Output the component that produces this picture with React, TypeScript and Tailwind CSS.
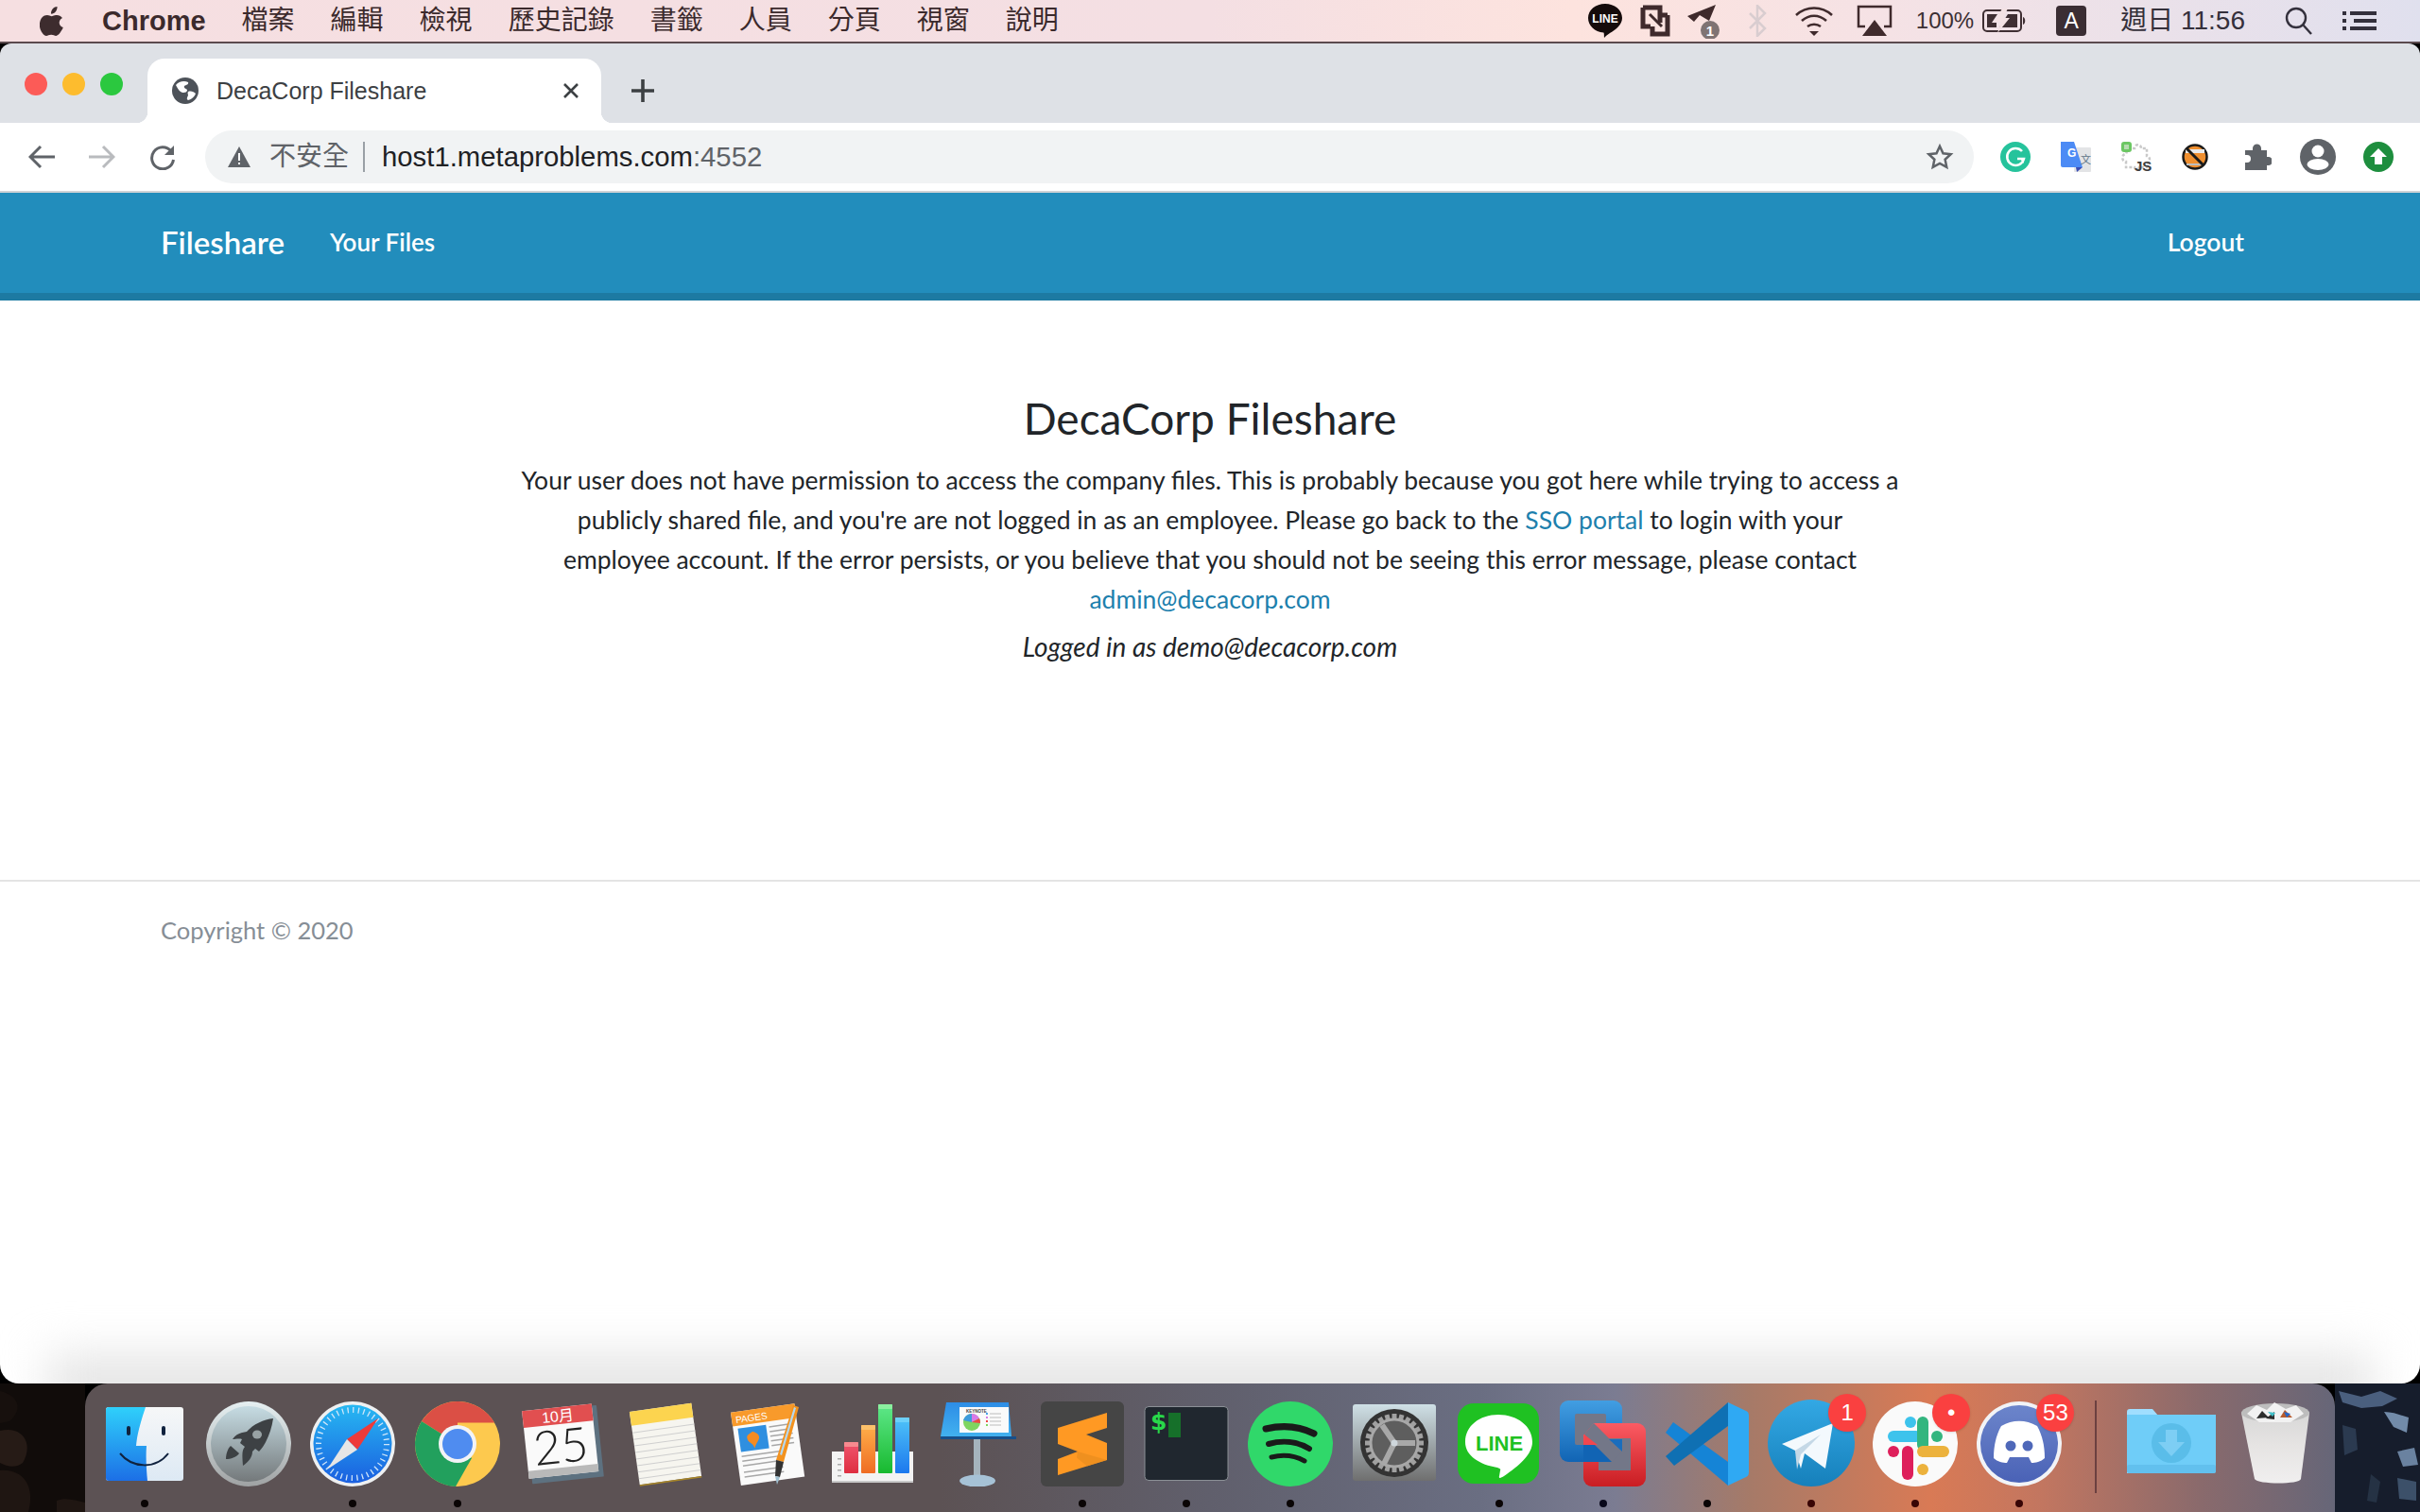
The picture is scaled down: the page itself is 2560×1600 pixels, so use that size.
import React from "react";

const sans = "font-['Liberation_Sans',sans-serif]";

function Apple() {
  return (
    <svg width="26" height="32" viewBox="0 0 26 32" fill="#3d2c2e">
      <path d="M18.5 1c.2 2.200-.6 4-1.800 5.400-1.300 1.500-3 2.400-4.700 2.200-.2-2 .7-4 1.800-5.300C15.100 1.900 17 1 18.500 1zM24.800 23c-.8 1.800-1.200 2.600-2.200 4.100-1.400 2.200-3.100 4.800-5.300 4.800-1.900 0-2.500-1.200-5.200-1.200-2.600 0-3.300 1.200-5.200 1.300-2.200 0-3.800-2.400-5.100-4.500C-1.800 21.700-.3 13.200 5 10.600c1.900-1 4-.8 5.400-.2 1.100.4 1.900.8 2.500.8.600 0 1.600-.5 3-.9 2.900-.9 6-.1 8.100 2.600-4.900 2.800-4.100 8.900.8 10.100z" />
    </svg>
  );
}

function MenuRight() {
  return (
    <div className="ml-auto flex items-center h-full">
      <svg width="44" height="42" viewBox="0 0 44 42">
        <path d="M22 3c10 0 18 6.600 18 15 0 6.800-6 12-13 16-3 1.900-5 3.800-6 5-.3-1.600.2-4.600-.6-5.400C11 32.500 4 26.400 4 18 4 9.600 12 3 22 3z" fill="#150b0b" />
        <text x="22" y="22.500" textAnchor="middle" fontSize="12" fontWeight="700" fill="#fff" fontFamily="Liberation Sans">LINE</text>
      </svg>
      <svg width="36" height="36" viewBox="0 0 36 36" className="ml-[14px]" fill="none">
        <path d="M4 4h18v16M4 4v20h8" stroke="#3f2a2c" strokeWidth="5" />
        <path d="M30 12v20H14v-8M30 12h-8" stroke="#3f2a2c" strokeWidth="5" />
        <path d="M11 11l13 13" stroke="#3f2a2c" strokeWidth="3" />
      </svg>
      <svg width="38" height="38" viewBox="0 0 38 38" className="ml-[14px]">
        <path d="M1 14L31 2 24 19 14 13 8 20z" fill="#3f2a2c" />
        <circle cx="25" cy="29" r="10" fill="#7f7373" />
        <text x="25" y="35" textAnchor="middle" fontSize="15" fontWeight="700" fill="#fff" fontFamily="Liberation Sans">1</text>
      </svg>
      <svg width="22" height="34" viewBox="0 0 22 34" className="ml-[26px]" fill="none" stroke="#d9cdd0" strokeWidth="2.500">
        <path d="M3 9l16 16-8 8V1l8 8L3 25" />
      </svg>
      <svg width="42" height="34" viewBox="0 0 42 34" className="ml-[28px]" fill="none" stroke="#3f2a2c" strokeWidth="2.600">
        <path d="M2 11c11-10 27-10 38 0M8 17c8-7 18-7 26 0M14 23c4-3 10-3 14 0" />
        <path d="M16 28h10l-5 5z" fill="#3f2a2c" stroke="none" />
      </svg>
      <svg width="38" height="36" viewBox="0 0 38 36" className="ml-[24px]" fill="none">
        <path d="M9 24H2V3h34v21h-7" stroke="#3f2a2c" strokeWidth="2.500" />
        <path d="M19 17l13 17H6z" fill="#3f2a2c" />
      </svg>
      <span className="ml-[25px] text-[24px] text-[#3b2f33] leading-none">100%</span>
      <svg width="48" height="28" viewBox="0 0 48 28" className="ml-[9px]" fill="none">
        <rect x="1" y="3" width="40" height="22" rx="4" stroke="#3f2f33" strokeWidth="2" />
        <path d="M5 7h11L10 16h5v5H5zM37 7h-10l-9 14h19z" fill="#3f2f33" />
        <path d="M21 1l-8 14h7l-4 12 13-16h-7l5-10z" fill="#f4e2e4" />
        <path d="M43 10c3 1 3 7 0 8z" fill="#3f2f33" />
      </svg>
      <div className="ml-[30px] flex h-[32px] w-[32px] items-center justify-center rounded-[4px] bg-[#3a2d33] text-[23px] text-white">A</div>
      <span className="ml-[36px] whitespace-nowrap text-[28px] leading-none text-[#35303b] font-['Liberation_Sans','Noto_Sans_CJK_TC',sans-serif]">週日 11:56</span>
      <svg width="30" height="30" viewBox="0 0 30 30" className="ml-[42px]" fill="none" stroke="#33303c" strokeWidth="2.400">
        <circle cx="12" cy="12" r="10" />
        <path d="M19 19l9 10" />
      </svg>
      <svg width="36" height="22" viewBox="0 0 36 22" className="ml-[31px] mr-[46px]" fill="#33303c">
        <rect x="0" y="1" width="4" height="4" />
        <rect x="8" y="1" width="28" height="4" />
        <rect x="0" y="9" width="4" height="4" />
        <rect x="12" y="9" width="24" height="4" />
        <rect x="0" y="17" width="4" height="4" />
        <rect x="8" y="17" width="28" height="4" />
      </svg>
    </div>
  );
}

function MenuBar() {
  const items = ["檔案", "編輯", "檢視", "歷史記錄", "書籤", "人員", "分頁", "視窗", "說明"];
  return (
    <div className="flex h-[46px] shrink-0 items-center border-b-2 border-[#5b4a4e] bg-[linear-gradient(90deg,#f6dfe1_0%,#f4dfe3_50%,#fde3de_65%,#f5e2e5_78%,#e0e0ee_100%)] pl-[42px] text-[#3b2a2c] font-['Liberation_Sans','Noto_Sans_CJK_TC',sans-serif]">
      <Apple />
      <span className="ml-[40px] text-[29px] font-bold leading-none">Chrome</span>
      <div className="ml-[38px] flex gap-[38px] text-[28px] leading-none">
        {items.map((t) => (
          <span key={t}>{t}</span>
        ))}
      </div>
      <MenuRight />
    </div>
  );
}

function Globe() {
  return (
    <svg width="28" height="28" viewBox="0 0 28 28">
      <circle cx="14" cy="14" r="14" fill="#4d5259" />
      <path d="M4 8c3-4 9-5 13-3 1 2-2 3-4 4-1 2 2 3 3 4 0 3-3 3-5 3-3-1-5-4-7-8zM17 15c3-1 6 0 8 2-1 3-4 6-8 7-2-1-1-3 0-5 0-1-1-3 0-4z" fill="#fff" />
    </svg>
  );
}

function TabStrip() {
  return (
    <div className="flex h-[84px] shrink-0 items-start rounded-t-[12px] bg-[#dee1e6]">
      <div className="mt-[31px] ml-[26px] flex gap-[16px]">
        <div className="h-[24px] w-[24px] rounded-full bg-[#fc5b57]" />
        <div className="h-[24px] w-[24px] rounded-full bg-[#fdbc2e]" />
        <div className="h-[24px] w-[24px] rounded-full bg-[#2bc83f]" />
      </div>
      <div className="relative mt-[16px] ml-[26px] flex h-[68px] w-[480px] items-center rounded-t-[18px] bg-white pl-[26px] pr-[23px]">
        <div className="absolute bottom-0 -left-[12px] h-[12px] w-[12px] bg-[radial-gradient(circle_at_0_0,#dee1e6_12px,#ffffff_12.500px)]" />
        <div className="absolute bottom-0 -right-[12px] h-[12px] w-[12px] bg-[radial-gradient(circle_at_100%_0,#dee1e6_12px,#ffffff_12.500px)]" />
        <Globe />
        <span className="ml-[19px] text-[25px] leading-none text-[#3c4043]">DecaCorp Fileshare</span>
        <svg width="18" height="18" viewBox="0 0 18 18" className="ml-auto" stroke="#3c4043" strokeWidth="2.600">
          <path d="M2 2l14 14M16 2L2 16" />
        </svg>
      </div>
      <svg width="24" height="24" viewBox="0 0 24 24" className="mt-[38px] ml-[32px]" stroke="#3c4043" strokeWidth="3.600">
        <path d="M12 0v24M0 12h24" />
      </svg>
    </div>
  );
}

function ToolCell({ children }: { children: React.ReactNode }) {
  return <div className="flex h-[64px] w-[64px] shrink-0 items-center justify-center">{children}</div>;
}

function Toolbar() {
  return (
    <div className="flex h-[74px] shrink-0 items-center border-b-2 border-[#d0d3d6] bg-white pl-[12px] pr-[12px]">
      <ToolCell>
        <svg width="28" height="26" viewBox="0 0 28 26" fill="none" stroke="#5f6368" strokeWidth="3">
          <path d="M13 2L2 13l11 11M2 13h26" />
        </svg>
      </ToolCell>
      <ToolCell>
        <svg width="28" height="26" viewBox="0 0 28 26" fill="none" stroke="#b9bbbe" strokeWidth="3">
          <path d="M15 2l11 11-11 11M26 13H0" />
        </svg>
      </ToolCell>
      <ToolCell>
        <svg width="28" height="28" viewBox="0 0 28 28" fill="none">
          <path d="M23 8A11.500 11.500 0 1 0 25.500 17" stroke="#5f6368" strokeWidth="3" />
          <path d="M26 2v10H16z" fill="#5f6368" />
        </svg>
      </ToolCell>
      <div className="ml-[13px] flex h-[56px] flex-1 items-center rounded-full bg-[#f1f3f4] pl-[23px] font-['Liberation_Sans','Noto_Sans_CJK_TC',sans-serif]">
        <svg width="26" height="24" viewBox="0 0 26 24">
          <path d="M13 1l12 22H1z" fill="#5f6368" />
          <path d="M12 8h2v8h-2zM12 18h2v2h-2z" fill="#fff" />
        </svg>
        <span className="ml-[19px] text-[28px] leading-none text-[#5f6368]">不安全</span>
        <div className="ml-[15px] h-[32px] w-[2px] bg-[#9aa0a6]" />
        <span className="ml-[18px] text-[29.300px] leading-none text-[#202124]">
          host1.metaproblems.com<span className="text-[#5f6368]">:4552</span>
        </span>
        <svg width="32" height="30" viewBox="0 0 24 24" className="ml-auto mr-[20px]" fill="none" stroke="#5f6368" strokeWidth="2">
          <path d="M12 3l2.800 6 6.500.8-4.800 4.400 1.300 6.500L12 17.500 6.200 20.700l1.300-6.500L2.700 9.800 9.200 9z" />
        </svg>
      </div>
      <div className="ml-[12px] flex">
        <ToolCell>
          <svg width="32" height="32" viewBox="0 0 32 32" fill="none">
            <circle cx="16" cy="16" r="16" fill="#26c39c" />
            <path d="M23 10a9 9 0 1 0 2 8h-7" stroke="#fff" strokeWidth="2.500" />
            <path d="M25 23v-6h-5z" fill="#fff" />
          </svg>
        </ToolCell>
        <ToolCell>
          <svg width="32" height="32" viewBox="0 0 32 32">
            <rect x="14" y="6" width="18" height="26" rx="1" fill="#e3e4e6" />
            <path d="M0 0h14l9 27H2a2 2 0 0 1-2-2z" fill="#4c8bf5" />
            <path d="M16 27h7l-6 5z" fill="#3a4db5" />
            <text x="7" y="16" fontSize="12" fontWeight="700" fill="#fff" fontFamily="Liberation Sans">G</text>
            <text x="21" y="23" fontSize="11" fill="#5d7386" fontFamily="Noto Sans CJK TC">文</text>
          </svg>
        </ToolCell>
        <ToolCell>
          <svg width="34" height="34" viewBox="0 0 34 34">
            <path d="M8 8h7c0-5 7-5 7 0h6v8c4 0 4 8 0 8v4h-8c0 3-5 3-5 0H6v-6c-5 0-5-8 0-8z" fill="#fff" stroke="#c9c9c9" strokeWidth="2.500" strokeDasharray="3 2" />
            <rect x="1" y="1" width="11" height="11" rx="3" fill="#6cc763" />
            <rect x="4" y="4" width="5" height="5" fill="#b7dcb1" />
            <text x="15" y="32" fontSize="15" fontWeight="700" fill="#3c3c3c" fontFamily="Liberation Sans">JS</text>
          </svg>
        </ToolCell>
        <ToolCell>
          <svg width="28" height="28" viewBox="0 0 28 28" fill="none" className="-ml-[4px]">
            <circle cx="14" cy="14" r="12.500" fill="#ef8f2f" stroke="#1a1a1a" strokeWidth="2.500" />
            <path d="M4 6h20v4H4z" fill="#e9e9e9" />
            <path d="M5 23h18v-2H5z" fill="#bdbdbd" />
            <path d="M5 5l18 18" stroke="#1a1a1a" strokeWidth="3" />
          </svg>
        </ToolCell>
        <ToolCell>
          <svg width="30" height="30" viewBox="0 0 30 30" fill="#5f6368">
            <path d="M2 8h8V6a4.500 4.500 0 0 1 9 0v2h6v7h1.500a4.500 4.500 0 0 1 0 9H25v5H2v-8h2a4 4 0 0 0 0-8H2z" />
          </svg>
        </ToolCell>
        <ToolCell>
          <svg width="38" height="38" viewBox="0 0 38 38">
            <circle cx="19" cy="19" r="19" fill="#5f6368" />
            <circle cx="19" cy="13" r="6.500" fill="#fff" />
            <ellipse cx="19" cy="27" rx="11.500" ry="6" fill="#fff" />
          </svg>
        </ToolCell>
        <ToolCell>
          <svg width="32" height="32" viewBox="0 0 32 32">
            <circle cx="16" cy="16" r="16" fill="#1e8e3e" />
            <path d="M16 7l9 9h-5v8h-8v-8H7z" fill="#fff" />
          </svg>
        </ToolCell>
      </div>
    </div>
  );
}

function Navbar() {
  return (
    <div className="flex h-[114px] shrink-0 items-center border-b-[8px] border-[#1d7aa2] bg-[#228dbc] px-[170px] pb-[2px] text-white font-['Lato',sans-serif]">
      <span className="text-[33px] font-semibold leading-none">Fileshare</span>
      <span className="ml-[48px] text-[26px] font-semibold leading-none">Your Files</span>
      <span className="ml-auto mr-[16px] text-[26.500px] font-semibold leading-none">Logout</span>
    </div>
  );
}

function Content() {
  return (
    <div className="relative flex flex-1 flex-col overflow-hidden rounded-b-[20px] bg-white font-['Lato',sans-serif]">
      <div className="flex flex-col items-center text-center pt-[96px]">
        <h1 className="text-[46px] leading-[58px] text-[#212529]">DecaCorp Fileshare</h1>
        <p className="mt-[15px] whitespace-nowrap text-[26.500px] leading-[42px] text-[#212529]">
          Your user does not have permission to access the company files. This is probably because you got here while trying to access a
          <br />
          publicly shared file, and you&apos;re are not logged in as an employee. Please go back to the <a className="text-[#1d80ad]">SSO portal</a> to login with your
          <br />
          employee account. If the error persists, or you believe that you should not be seeing this error message, please contact
          <br />
          <a className="text-[#1d80ad]">admin@decacorp.com</a>
        </p>
        <p className="mt-[8px] text-[28px] italic leading-[42px] text-[#212529]">Logged in as demo@decacorp.com</p>
      </div>
      <div className="mt-[226px] border-t-2 border-[#e4e4e4] pl-[170px] pt-[30px] text-[25.500px] leading-[42px] text-[#868e96]">Copyright © 2020</div>
      <div className="absolute inset-x-[50px] -bottom-[30px] h-[60px] bg-[#e4e4e4] blur-[24px]" />
    </div>
  );
}

/* ---------- dock icons (viewBox 90x90) ---------- */
function Finder() {
  return (
    <svg width="90" height="90" viewBox="0 0 90 90">
      <defs>
        <linearGradient id="fb" x1="0" y1="0" x2="0" y2="1"><stop offset="0" stopColor="#2fd0fb" /><stop offset="1" stopColor="#1c6fe6" /></linearGradient>
        <linearGradient id="fw" x1="0" y1="0" x2="0" y2="1"><stop offset="0" stopColor="#f6f7f8" /><stop offset="1" stopColor="#dde9f4" /></linearGradient>
      </defs>
      <rect x="4" y="6" width="82" height="78" rx="3" fill="url(#fw)" />
      <path d="M7 6h39c-4 12-9 28-10 41h11c-1 12 0 27 1 37H7a3 3 0 0 1-3-3V9a3 3 0 0 1 3-3z" fill="url(#fb)" />
      <rect x="26" y="26" width="4" height="10" rx="2" fill="#10223e" />
      <rect x="63" y="26" width="4" height="10" rx="2" fill="#10223e" />
      <path d="M19 55c13 16 38 17 51 0" fill="none" stroke="#10223e" strokeWidth="2" />
    </svg>
  );
}

function Launchpad() {
  return (
    <svg width="90" height="90" viewBox="0 0 90 90">
      <defs>
        <linearGradient id="lp" x1="0" y1="0" x2="0" y2="1"><stop offset="0" stopColor="#c6dce3" /><stop offset="1" stopColor="#74797b" /></linearGradient>
        <linearGradient id="lr" x1="0" y1="0" x2="0" y2="1"><stop offset="0" stopColor="#e6f0f2" /><stop offset="1" stopColor="#9fa2a3" /></linearGradient>
      </defs>
      <circle cx="45" cy="45" r="45" fill="url(#lr)" />
      <circle cx="45" cy="45" r="40" fill="url(#lp)" />
      <path d="M71 18c-10 1-21 6-28 14-6 1-11 2-15 8 2 0 8-1 10 0l-2 4 5 4c-3 4-3 7-2 20 6-4 10-9 10-15l3-3 4 3c7-7 13-21 15-35z" fill="#3d4144" />
      <path d="M26 47c-3 3-5 8-5 14 5 0 11-2 14-6z" fill="#3d4144" />
      <ellipse cx="54" cy="35" rx="5" ry="4.500" fill="#98a2a4" />
    </svg>
  );
}

function Safari() {
  return (
    <svg width="90" height="90" viewBox="0 0 90 90">
      <defs>
        <linearGradient id="sb" x1="0" y1="0" x2="0" y2="1"><stop offset="0" stopColor="#27b8f2" /><stop offset="1" stopColor="#1a5fe0" /></linearGradient>
      </defs>
      <circle cx="45" cy="45" r="45" fill="#eef0f1" />
      <circle cx="45" cy="45" r="41.500" fill="url(#sb)" />
      <circle cx="45" cy="45" r="36" fill="none" stroke="#cfe6fa" strokeWidth="6" strokeDasharray="1.300 4.350" />
      <path d="M72 18L39 40l11 11z" fill="#ee3a3a" />
      <path d="M18 72l21-32 11 11z" fill="#e6e6e6" />
    </svg>
  );
}

function Chrome() {
  return (
    <svg width="90" height="90" viewBox="0 0 90 90">
      <circle cx="45" cy="45" r="45" fill="#fdc94e" />
      <path d="M45 45L7 21A45 45 0 0 1 84 22.500H45z" fill="#db4f45" />
      <path d="M45 45L7 21A45 45 0 0 0 43 90L60 60z" fill="#22a05d" />
      <circle cx="45" cy="45" r="20" fill="#f2f3f6" />
      <circle cx="45" cy="45" r="16" fill="#4f8cf0" />
    </svg>
  );
}

function Calendar() {
  return (
    <svg width="90" height="90" viewBox="0 0 90 90">
      <g transform="rotate(-6 45 45)">
        <rect x="10" y="8" width="76" height="76" rx="1" fill="#5d7180" />
        <rect x="7" y="6" width="74" height="72" fill="#fafafa" />
        <rect x="7" y="6" width="74" height="18" fill="#e14f50" />
        <rect x="7" y="70" width="74" height="8" fill="#b9b9b9" />
        <text x="44" y="21" textAnchor="middle" fontSize="16" fill="#fff" fontFamily="Liberation Sans, Noto Sans CJK TC">10月</text>
        <text x="44" y="65" textAnchor="middle" fontSize="50" fontWeight="300" fill="#222" fontFamily="Lato">25</text>
      </g>
    </svg>
  );
}

function Notes() {
  return (
    <svg width="90" height="90" viewBox="0 0 90 90">
      <g transform="rotate(-8 45 45)">
        <rect x="12" y="6" width="66" height="78" fill="#f6f5ef" />
        <rect x="12" y="84" width="66" height="1.500" fill="#a98728" />
        <rect x="12" y="6" width="66" height="15" fill="#fcd44f" />
        {[28, 35, 42, 49, 56, 63, 70, 77].map((y) => (
          <rect key={y} x="12" y={y} width="66" height="1" fill="#cfcfcf" />
        ))}
      </g>
    </svg>
  );
}

function Pages() {
  return (
    <svg width="90" height="90" viewBox="0 0 90 90">
      <g transform="rotate(-8 40 45)">
        <rect x="9" y="7" width="68" height="78" fill="#fafafa" />
        <rect x="9" y="7" width="68" height="15" fill="#f89a2b" />
        <text x="13" y="19" fontSize="10" fill="#fff" fontFamily="Liberation Sans">PAGES</text>
        <rect x="14" y="25" width="30" height="25" fill="#2f8fe0" />
        <path d="M29 30c-5 3-8 3-6 9 2 3 5 4 6 9 1-4 5-7 6-10 1-4-2-6-6-8z" fill="#f58b22" />
        {[27, 32, 37, 42, 47].map((y) => (
          <rect key={y} x="47" y={y} width="24" height="1.500" fill="#a7a7a7" />
        ))}
        {[54, 59, 64, 71, 76].map((y) => (
          <rect key={y} x="14" y={y} width="42" height="1.500" fill="#a7a7a7" />
        ))}
      </g>
      <path d="M70 4l6 2-16 58-8-2z" fill="#f3921e" />
      <path d="M71 6l2 1-15 50-2-1z" fill="#b5d8ef" />
      <path d="M52 62l8 2-4 16-5-1z" fill="#333" />
      <path d="M51 79l5 1-3 8z" fill="#9fbfd0" />
    </svg>
  );
}

function Numbers() {
  const bars = [
    { id: "n1", x: 14, y: 43, h: 33, a: "#f0566f", b: "#de2e40", c: "#f78a8f" },
    { id: "n2", x: 32, y: 25, h: 51, a: "#ffb04a", b: "#ef6c23", c: "#fcc06a" },
    { id: "n3", x: 50, y: 3, h: 73, a: "#5fe88a", b: "#18b92f", c: "#8bef9f" },
    { id: "n4", x: 68, y: 17, h: 59, a: "#4fc4f8", b: "#1c78ee", c: "#6dd0fa" },
  ];
  return (
    <svg width="90" height="90" viewBox="0 0 90 90">
      <defs>
        {bars.map((b) => (
          <linearGradient key={b.id} id={b.id} x1="0" y1="0" x2="0" y2="1"><stop offset="0" stopColor={b.a} /><stop offset="1" stopColor={b.b} /></linearGradient>
        ))}
      </defs>
      <path d="M1 53h86v33H1z" fill="#f3f3f3" />
      <rect x="1" y="84" width="86" height="2" fill="#c9c9c9" />
      {[60, 66, 72, 78].map((y) => (
        <rect key={y} x="7" y={y} width="4" height="1.500" fill="#aaa" />
      ))}
      {bars.map((b) => (
        <g key={b.id}>
          <rect x={b.x} y={b.y} width="15" height={b.h} rx="1" fill={`url(#${b.id})`} />
          <rect x={b.x} y={b.y} width="15" height="5" rx="1" fill={b.c} />
        </g>
      ))}
    </svg>
  );
}

function Keynote() {
  return (
    <svg width="90" height="90" viewBox="0 0 90 90">
      <defs>
        <linearGradient id="kn" x1="0" y1="0" x2="0" y2="1"><stop offset="0" stopColor="#2d8de6" /><stop offset="1" stopColor="#42b1ef" /></linearGradient>
      </defs>
      <rect x="40" y="38" width="7" height="42" fill="#a5b4bd" />
      <ellipse cx="44" cy="84" rx="19" ry="6.500" fill="#a6c2d6" />
      <path d="M11 1h66l3 36H5z" fill="url(#kn)" />
      <rect x="5" y="37" width="80" height="3" fill="#174f8a" />
      <rect x="25" y="6" width="52" height="27" fill="#fafafa" />
      <text x="32" y="12" fontSize="4.500" fontWeight="700" fill="#444" fontFamily="Liberation Sans">KEYNOTE</text>
      <circle cx="38" cy="22" r="9" fill="#7ed560" />
      <path d="M38 22V13a9 9 0 0 0-9 7z" fill="#3d9bdc" />
      <path d="M38 22V13a9 9 0 0 1 8 5z" fill="#d77ae6" />
      <path d="M38 22l8-4a9 9 0 0 1 1 5z" fill="#ee4646" />
      {[12, 16, 20, 24].map((y, i) => (
        <rect key={y} x="53" y={y} width="2" height="2" fill={["#4aa3ec", "#d77ae6", "#ee4646", "#7ed560"][i]} />
      ))}
      {[12, 16, 20, 24].map((y) => (
        <rect key={y} x="57" y={y + 0.5} width="12" height="1" fill="#bbb" />
      ))}
    </svg>
  );
}

function Sublime() {
  return (
    <svg width="90" height="90" viewBox="0 0 90 90">
      <rect x="1" y="0" width="88" height="90" rx="6" fill="#454545" />
      <path d="M71 12v16L49 35l22 9v18L19 78V61l21-8-21-8V28z" fill="#ff9923" />
      <path d="M40 53l31 9-21 6.500-11-9z" fill="#e88c1e" fillOpacity="0.7" />
    </svg>
  );
}

function Terminal() {
  return (
    <svg width="90" height="90" viewBox="0 0 90 90">
      <rect x="1" y="5.500" width="88" height="78" rx="4" fill="#20272f" stroke="#8b9096" strokeWidth="1" />
      <text x="7" y="30" fontSize="25" fontWeight="700" fill="#28d84a" fontFamily="DejaVu Sans">$</text>
      <rect x="26" y="12" width="13" height="26" fill="#16702a" />
    </svg>
  );
}

function Spotify() {
  return (
    <svg width="90" height="90" viewBox="0 0 90 90">
      <circle cx="45" cy="45" r="45" fill="#30d86a" />
      <path d="M19 29c17-4 35-3 51 5" fill="none" stroke="#1a1a1a" strokeWidth="7" strokeLinecap="round" />
      <path d="M22 45c14-4 30-3 43 5" fill="none" stroke="#1a1a1a" strokeWidth="6" strokeLinecap="round" />
      <path d="M25 59c12-3 24-2 35 4" fill="none" stroke="#1a1a1a" strokeWidth="5" strokeLinecap="round" />
    </svg>
  );
}

function SysPrefs() {
  const teeth = Array.from({ length: 24 }, (_, i) => (i * 360) / 24);
  return (
    <svg width="90" height="90" viewBox="0 0 90 90">
      <defs>
        <linearGradient id="sp" x1="0" y1="0" x2="0" y2="1"><stop offset="0" stopColor="#cfe0e6" /><stop offset="1" stopColor="#6f6f6f" /></linearGradient>
      </defs>
      <rect x="1" y="3" width="88" height="81" rx="3" fill="url(#sp)" />
      <circle cx="45" cy="44" r="36" fill="#333" />
      {teeth.map((d) => (
        <rect key={d} x="42.500" y="13" width="5" height="8" fill="#a0a0a0" transform={`rotate(${d} 45 44)`} />
      ))}
      <circle cx="45" cy="44" r="25" fill="#5e5e5e" stroke="#a8a8a8" strokeWidth="3" />
      <path d="M45 44L32 25M45 44l22 0M45 44L34 66" stroke="#a8a8a8" strokeWidth="6" />
      <circle cx="45" cy="44" r="3.500" fill="#cfd7dc" />
    </svg>
  );
}

function LineApp() {
  return (
    <svg width="90" height="90" viewBox="0 0 90 90">
      <rect x="1" y="2" width="86" height="85" rx="17" fill="#1fc122" />
      <path d="M44 14c20 0 36 12 36 29 0 13-14 25-30 36-3 2-6 3-5 0l1-6c1-2-1-2-3-3C25 67 9 58 9 43c0-17 15-29 35-29z" fill="#fff" />
      <text x="45" y="52" textAnchor="middle" fontSize="22" fontWeight="700" fill="#1fc122" fontFamily="Liberation Sans">LINE</text>
    </svg>
  );
}

function VMware() {
  const gap = "#737788";
  return (
    <svg width="92" height="92" viewBox="0 0 92 92" className="-mt-[1px] shrink-0">
      <defs>
        <linearGradient id="vb" x1="0" y1="0" x2="0" y2="1"><stop offset="0" stopColor="#429ee2" /><stop offset="1" stopColor="#1164b4" /></linearGradient>
        <linearGradient id="vr" x1="0" y1="0" x2="0" y2="1"><stop offset="0" stopColor="#fb5b63" /><stop offset="1" stopColor="#c91d22" /></linearGradient>
      </defs>
      <rect x="0" y="0" width="66" height="65" rx="9" fill="url(#vb)" />
      <rect x="16" y="14" width="33" height="33" rx="2" fill={gap} />
      <rect x="25" y="24" width="66" height="67" rx="9" fill="url(#vr)" />
      <path d="M25 24h11L26 36h-1z" fill={gap} />
      <rect x="41" y="40" width="34" height="34" fill={gap} />
      <path d="M26 36l10-12 30 30-11 11z" fill={gap} />
      <path d="M52 41h14v13z" fill="#1a6dbd" />
      <path d="M26 36v11h14z" fill="#f2464e" />
      <path d="M25 47h12l18 18H25z" fill="#1164b4" />
    </svg>
  );
}

function VSCode() {
  return (
    <svg width="92" height="90" viewBox="0 0 92 90" className="shrink-0">
      <path d="M2 33l8-11 58 42v25z" fill="#1584d6" />
      <path d="M2 58l9 10 57-42V1z" fill="#0f70b3" />
      <path d="M68 1l19 9q3 1 3 5v60q0 4-3 5L68 89z" fill="#2fa9f3" />
    </svg>
  );
}

function Telegram() {
  return (
    <svg width="92" height="92" viewBox="0 0 92 92" className="-mt-[2px] shrink-0">
      <defs>
        <linearGradient id="tg" x1="0" y1="0" x2="0" y2="1"><stop offset="0" stopColor="#33a8e4" /><stop offset="1" stopColor="#1680bb" /></linearGradient>
      </defs>
      <circle cx="46" cy="46" r="46" fill="url(#tg)" />
      <path d="M15 47l54-22-8 48-22-16-4 16-6-19z" fill="#f3f9fd" />
      <path d="M29 54l27-17-21 21-4 16z" fill="#c4d8e6" />
    </svg>
  );
}

function Slack() {
  return (
    <svg width="90" height="90" viewBox="0 0 90 90">
      <circle cx="45" cy="45" r="45" fill="#fafafa" />
      <g fill="none" strokeLinecap="round" strokeWidth="12">
        <path d="M22 37h24" stroke="#3dc3ec" />
        <path d="M53 22v24" stroke="#33b57f" />
        <path d="M37 53v24" stroke="#de1f5b" />
        <path d="M53 53h22" stroke="#ecb23d" />
      </g>
      <circle cx="40" cy="22" r="6" fill="#3dc3ec" />
      <circle cx="68" cy="37" r="6" fill="#33b57f" />
      <circle cx="22" cy="53" r="6" fill="#de1f5b" />
      <circle cx="53" cy="72" r="6" fill="#ecb23d" />
    </svg>
  );
}

function Discord() {
  return (
    <svg width="90" height="90" viewBox="0 0 90 90">
      <defs>
        <linearGradient id="dc" x1="0" y1="0" x2="0" y2="1"><stop offset="0" stopColor="#6c85cb" /><stop offset="1" stopColor="#4a62b6" /></linearGradient>
      </defs>
      <circle cx="45" cy="45" r="45" fill="#f2f3f6" />
      <circle cx="45" cy="45" r="41" fill="url(#dc)" />
      <path d="M26 26c12-7 26-7 38 0 5 9 8 20 8 34-4 4-10 5-14 5l-3-6H35l-3 6c-4 0-10-1-14-5 0-14 3-25 8-34z" fill="#fff" />
      <circle cx="36" cy="47" r="5.500" fill="#4f68b9" />
      <circle cx="54" cy="47" r="5.500" fill="#4f68b9" />
    </svg>
  );
}

function Downloads() {
  return (
    <svg width="94" height="90" viewBox="0 0 94 90" className="shrink-0">
      <path d="M3 8h24l6 7h56a3 3 0 0 1 3 3v58H0V11a3 3 0 0 1 3-3z" fill="#a0deff" />
      <path d="M0 14h94v59a3 3 0 0 1-3 3H3a3 3 0 0 1-3-3z" fill="#6fcdf8" />
      <rect x="0" y="67" width="94" height="9" rx="2" fill="#62c0ee" />
      <circle cx="47" cy="44" r="21" fill="#5abde9" />
      <path d="M41 30h12v13h8L47 58 33 43h8z" fill="#7dcef4" />
    </svg>
  );
}

function Trash() {
  return (
    <svg width="74" height="92" viewBox="0 0 74 92" className="-mt-[2px] shrink-0">
      <defs>
        <linearGradient id="tr" x1="0" y1="0" x2="0" y2="1"><stop offset="0" stopColor="#d6d6d6" /><stop offset="0.5" stopColor="#e6e4e3" /><stop offset="1" stopColor="#f0efef" /></linearGradient>
      </defs>
      <path d="M1 14c0-5 72-5 72 0l-9 70c-1 6-46 6-49 0z" fill="url(#tr)" />
      <ellipse cx="37" cy="14" rx="36" ry="10" fill="#bdbdbd" />
      <path d="M7 15l10-9 11 5 8-8 12 7 11-4 8 9-14 9H20z" fill="#f2f2f2" />
      <path d="M17 20l6-8 7 7zM27 20l9-7v8z" fill="#2d2d2d" />
      <path d="M42 19l5-8 8 8z" fill="#b75a2c" />
      <path d="M29 13l8 1-3 4z" fill="#42c0c9" />
      <path d="M46 13l7 2-4 4z" fill="#2566c6" />
    </svg>
  );
}

function Badge({ label }: { label: string }) {
  return (
    <div className="absolute -top-[8px] left-[63px] flex h-[40px] w-[40px] items-center justify-center rounded-full bg-[#fa4040] text-[24px] leading-none text-white shadow-sm">
      {label}
    </div>
  );
}

function DockItem({ children, dot, badge, dotColor = "bg-[#0a0505]" }: { children: React.ReactNode; dot?: boolean; badge?: string; dotColor?: string }) {
  return (
    <div className="flex w-[110.200px] shrink-0 flex-col items-center">
      <div className="relative flex h-[90px] w-[90px] items-start justify-center">
        {children}
        {badge !== undefined ? <Badge label={badge} /> : null}
      </div>
      {dot ? <div className={`mt-[14px] h-[8px] w-[8px] rounded-full ${dotColor}`} /> : null}
    </div>
  );
}

function Wallpaper({ side }: { side: "left" | "right" }) {
  if (side === "left") {
    return (
      <svg width="90" height="136" viewBox="0 0 90 136" className="shrink-0">
        <rect width="90" height="136" fill="#110c0a" />
        <path d="M0 8c18 4 26 18 10 32L0 42z" fill="#17100d" />
        <path d="M0 50c24-6 36 14 24 34-8 6-16 4-24 0z" fill="#261b16" />
        <path d="M0 92c22-2 38 14 30 44H0z" fill="#1f1612" />
        <path d="M60 124c10-4 20 0 30 2v10H60z" fill="#1f1612" />
      </svg>
    );
  }
  return (
    <svg width="90" height="136" viewBox="0 0 90 136" className="shrink-0">
      <rect width="90" height="136" fill="#161d2c" />
      <path d="M4 8l24 6 20-6 18 8-16 8-22 2L8 20z" fill="#4a5f7e" />
      <path d="M52 30c10 0 18 4 26 6l-2 16-14-6z" fill="#728ba9" />
      <path d="M66 72l18-4 4 18-16 2z" fill="#6a82a0" />
      <path d="M8 44l14 4 2 22-14 6z" fill="#2b3a50" />
      <path d="M66 100l20 4v20l-18-2z" fill="#3c5069" />
      <path d="M38 96l10 8-4 22-10-2z" fill="#253244" />
    </svg>
  );
}

function Dock() {
  return (
    <div className="flex h-[136px] shrink-0 overflow-hidden">
      <Wallpaper side="left" />
      <div className="flex h-full flex-1 rounded-t-[24px] bg-[linear-gradient(90deg,#5c5254_0%,#5c5254_38%,#605f6c_50%,#6a6e82_62%,#7b7c92_68%,#a67a68_74%,#d97a55_82%,#c27660_87%,#8a6a6c_94%,#666678_100%)] pt-[19px] pl-[8px]">
        <DockItem dot><Finder /></DockItem>
        <DockItem><Launchpad /></DockItem>
        <DockItem dot><Safari /></DockItem>
        <DockItem dot><Chrome /></DockItem>
        <DockItem><Calendar /></DockItem>
        <DockItem><Notes /></DockItem>
        <DockItem><Pages /></DockItem>
        <DockItem><Numbers /></DockItem>
        <DockItem><Keynote /></DockItem>
        <DockItem dot><Sublime /></DockItem>
        <DockItem dot><Terminal /></DockItem>
        <DockItem dot><Spotify /></DockItem>
        <DockItem><SysPrefs /></DockItem>
        <DockItem dot><LineApp /></DockItem>
        <DockItem dot dotColor="bg-[#08081a]"><VMware /></DockItem>
        <DockItem dot><VSCode /></DockItem>
        <DockItem dot badge="1" dotColor="bg-[#380505]"><Telegram /></DockItem>
        <DockItem dot badge="•" dotColor="bg-[#380505]"><Slack /></DockItem>
        <DockItem dot badge="53" dotColor="bg-[#380505]"><Discord /></DockItem>
        <div className="flex w-[50px] shrink-0 justify-center">
          <div className="-mt-[1px] h-[98px] w-[2px] bg-[#6c4040]" />
        </div>
        <DockItem><Downloads /></DockItem>
        <DockItem><Trash /></DockItem>
      </div>
      <Wallpaper side="right" />
    </div>
  );
}

export default function App() {
  return (
    <div className={`flex h-[1600px] w-[2560px] flex-col overflow-hidden bg-black ${sans}`}>
      <MenuBar />
      <div className="flex h-[1418px] shrink-0 flex-col">
        <TabStrip />
        <Toolbar />
        <Navbar />
        <Content />
      </div>
      <Dock />
    </div>
  );
}
